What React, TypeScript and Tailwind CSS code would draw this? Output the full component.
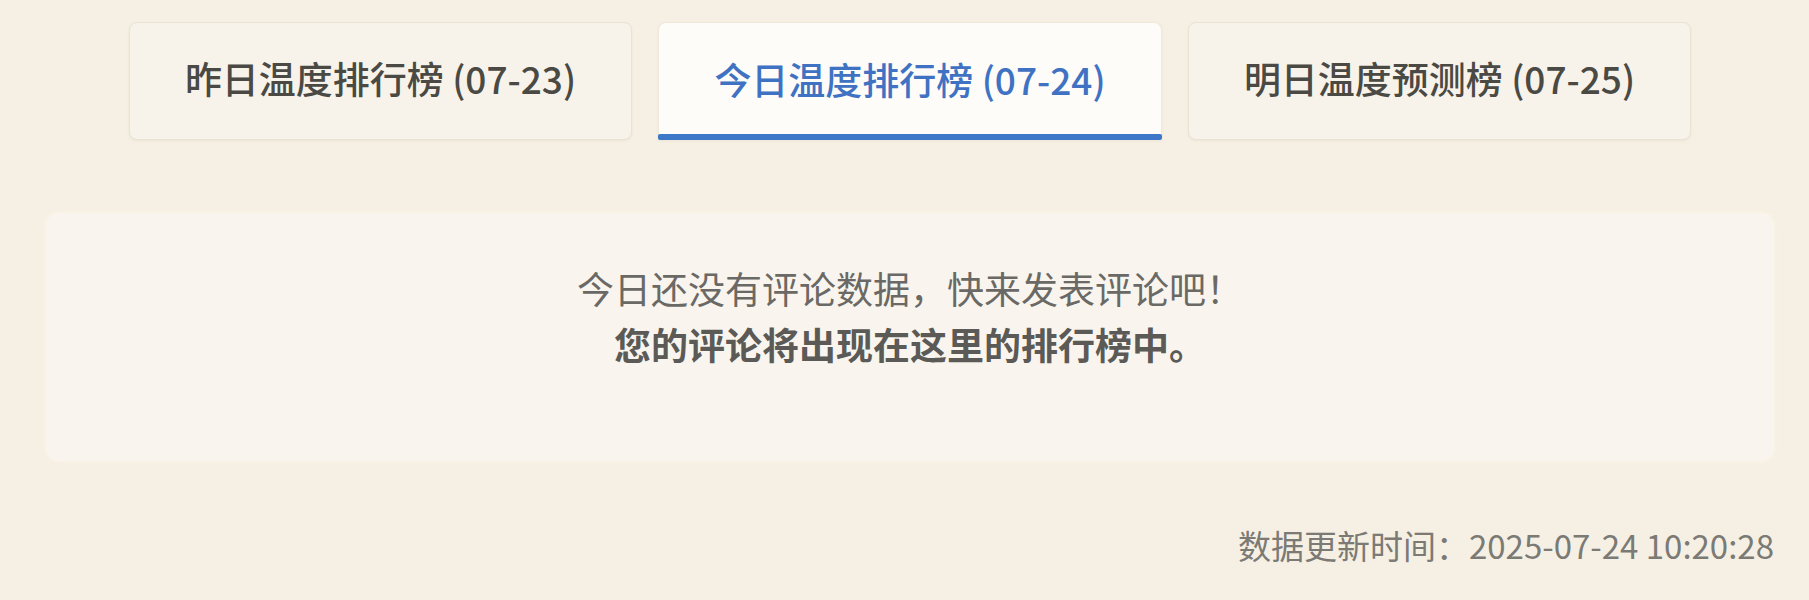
import React from "react";

const tabs = [
  { label: "昨日温度排行榜 (07-23)", active: false },
  { label: "今日温度排行榜 (07-24)", active: true },
  { label: "明日温度预测榜 (07-25)", active: false },
];

export default function App() {
  return (
    <div
      className="w-[1809px] h-[600px] bg-[#f6f0e4] overflow-hidden"
      style={{ fontFamily: '"Noto Sans CJK SC", "Noto Sans", sans-serif' }}
    >
      <div className="ml-[46px] w-[1728px] pt-[22px]">
        <div className="flex justify-center gap-[26px]">
          {tabs.map((t) =>
            t.active ? (
              <div
                key={t.label}
                className="w-[504px] h-[118px] rounded-t-[8px] bg-[#fdfcf9] border border-[#efe9dd] border-b-0 shadow-[0_1px_3px_rgba(120,100,60,0.08)] flex flex-col"
              >
                <div className="flex-1 flex items-center justify-center text-[37px] font-medium text-[#3f72c2] pt-[2px]">
                  {t.label}
                </div>
                <div className="h-[6px] bg-[#3c77c8] rounded-[2px] -mx-px" />
              </div>
            ) : (
              <div
                key={t.label}
                className="w-[503px] h-[118px] rounded-[8px] bg-[#f7f3ea] border border-[#e9e3d6] shadow-[0_1px_3px_rgba(120,100,60,0.08)] flex items-center justify-center text-[37px] font-medium text-[#4a4944] pb-[4px]"
              >
                {t.label}
              </div>
            )
          )}
        </div>

        <div className="mt-[73px] h-[248px] rounded-[14px] bg-[#f9f5ee] shadow-[0_0_4px_rgba(255,250,235,0.9)] pt-[47px] flex flex-col items-center text-[37px] leading-[56px]">
          <div className="text-[#6a6965]">今日还没有评论数据，快来发表评论吧！</div>
          <div className="font-bold text-[#5b5a56]">您的评论将出现在这里的排行榜中。</div>
        </div>

        <div className="mt-[57px] flex justify-end text-[33px] leading-[54px] text-[#7b7a75]">
          数据更新时间：2025-07-24 10:20:28
        </div>
      </div>
    </div>
  );
}
